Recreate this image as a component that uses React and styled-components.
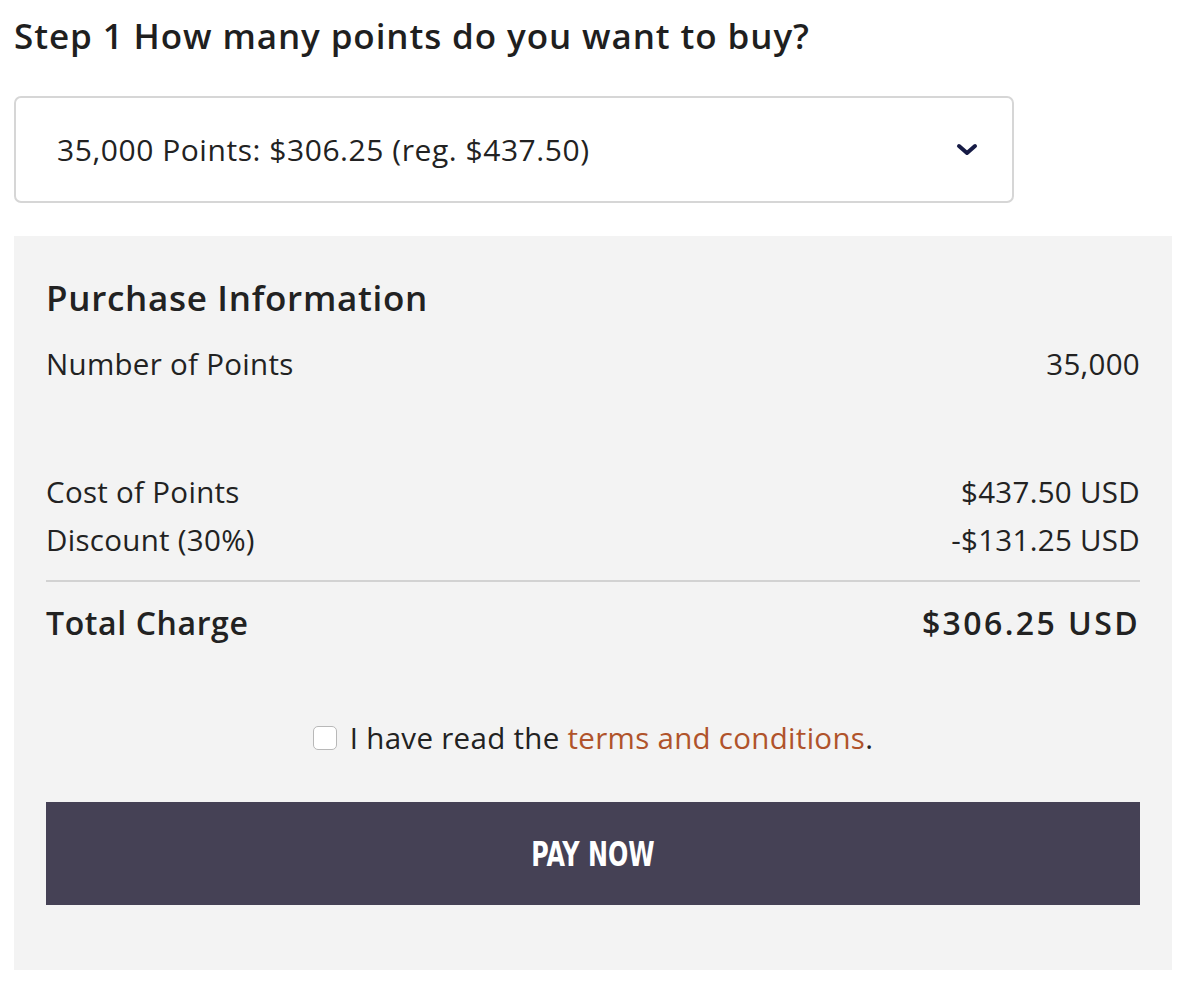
import React from "react";
import styled, { createGlobalStyle } from "styled-components";

const Global = createGlobalStyle`
  body {
    margin: 0;
    background: #fff;
    font-family: "Open Sans", "Lato", sans-serif;
    color: #222;
  }
`;

const Page = styled.div`
  padding: 16px 10px 0 14px;
`;

const Heading = styled.h1`
  margin: 0;
  font-size: 35px;
  line-height: 40px;
  font-weight: 600;
  letter-spacing: 0.9px;
  color: #1f1f1f;
`;

const Select = styled.div`
  margin-top: 40px;
  width: 1000px;
  box-sizing: border-box;
  height: 107px;
  border: 2px solid #d6d6d6;
  border-radius: 7px;
  display: flex;
  align-items: center;
  justify-content: space-between;
  padding: 0 34px 0 41px;
  font-size: 30px;
  letter-spacing: 0.55px;
  color: #222;
`;

const Panel = styled.section`
  margin-top: 33px;
  width: 1158px;
  box-sizing: border-box;
  background: #f3f3f3;
  padding: 40px 32px 65px;
`;

const Title = styled.h2`
  margin: 0;
  font-size: 35px;
  line-height: 44px;
  font-weight: 600;
  letter-spacing: 0.7px;
  color: #222;
`;

const Row = styled.div`
  display: flex;
  justify-content: space-between;
  font-size: ${(p) => (p.$total ? "32px" : "29.5px")};
  font-weight: ${(p) => (p.$total ? 600 : 400)};
  letter-spacing: ${(p) => (p.$total ? "0.6px" : "0.3px")};
  line-height: 40px;
  margin-top: ${(p) => p.$gap || 0}px;
`;

const Amount = styled.span`
  letter-spacing: ${(p) => (p.$wide ? "2.4px" : "inherit")};
`;

const Divider = styled.hr`
  margin: 20px 0 0;
  border: 0;
  border-top: 2px solid #d2d2d2;
`;

const Agree = styled.label`
  margin-top: 75px;
  display: flex;
  justify-content: center;
  align-items: center;
  gap: 13px;
  font-size: 29.5px;
  letter-spacing: 0.3px;
  line-height: 40px;
`;

const Box = styled.span`
  width: 24px;
  height: 24px;
  box-sizing: border-box;
  border: 1.5px solid #b8b8b8;
  border-radius: 5px;
  background: #fff;
`;

const Link = styled.a`
  color: #b0532b;
  text-decoration: none;
`;

const PayButton = styled.button`
  margin-top: 44px;
  width: 100%;
  height: 103px;
  border: 0;
  background: #454155;
  color: #fff;
  font-family: "DejaVu Sans Condensed", "DejaVu Sans", sans-serif;
  font-weight: 700;
  font-size: 34px;
  cursor: pointer;

  span {
    display: inline-block;
    transform: scaleX(0.78);
  }
`;

export default function App() {
  return (
    <Page>
      <Global />
      <Heading>Step 1 How many points do you want to buy?</Heading>
      <Select>
        <span>35,000 Points: $306.25 (reg. $437.50)</span>
        <svg width="22" height="14" viewBox="0 0 22 14">
          <path
            d="M3 3 L11 10 L19 3"
            fill="none"
            stroke="#161b45"
            strokeWidth="4"
            strokeLinecap="round"
            strokeLinejoin="round"
          />
        </svg>
      </Select>
      <Panel>
        <Title>Purchase Information</Title>
        <Row $gap={24}>
          <span>Number of Points</span>
          <Amount>35,000</Amount>
        </Row>
        <Row $gap={88}>
          <span>Cost of Points</span>
          <Amount>$437.50 USD</Amount>
        </Row>
        <Row $gap={8}>
          <span>Discount (30%)</span>
          <Amount>-$131.25 USD</Amount>
        </Row>
        <Divider />
        <Row $total $gap={21}>
          <span>Total Charge</span>
          <Amount $wide>$306.25 USD</Amount>
        </Row>
        <Agree>
          <Box />
          <span>
            I have read the <Link href="#">terms and conditions</Link>.
          </span>
        </Agree>
        <PayButton>
          <span>PAY NOW</span>
        </PayButton>
      </Panel>
    </Page>
  );
}
